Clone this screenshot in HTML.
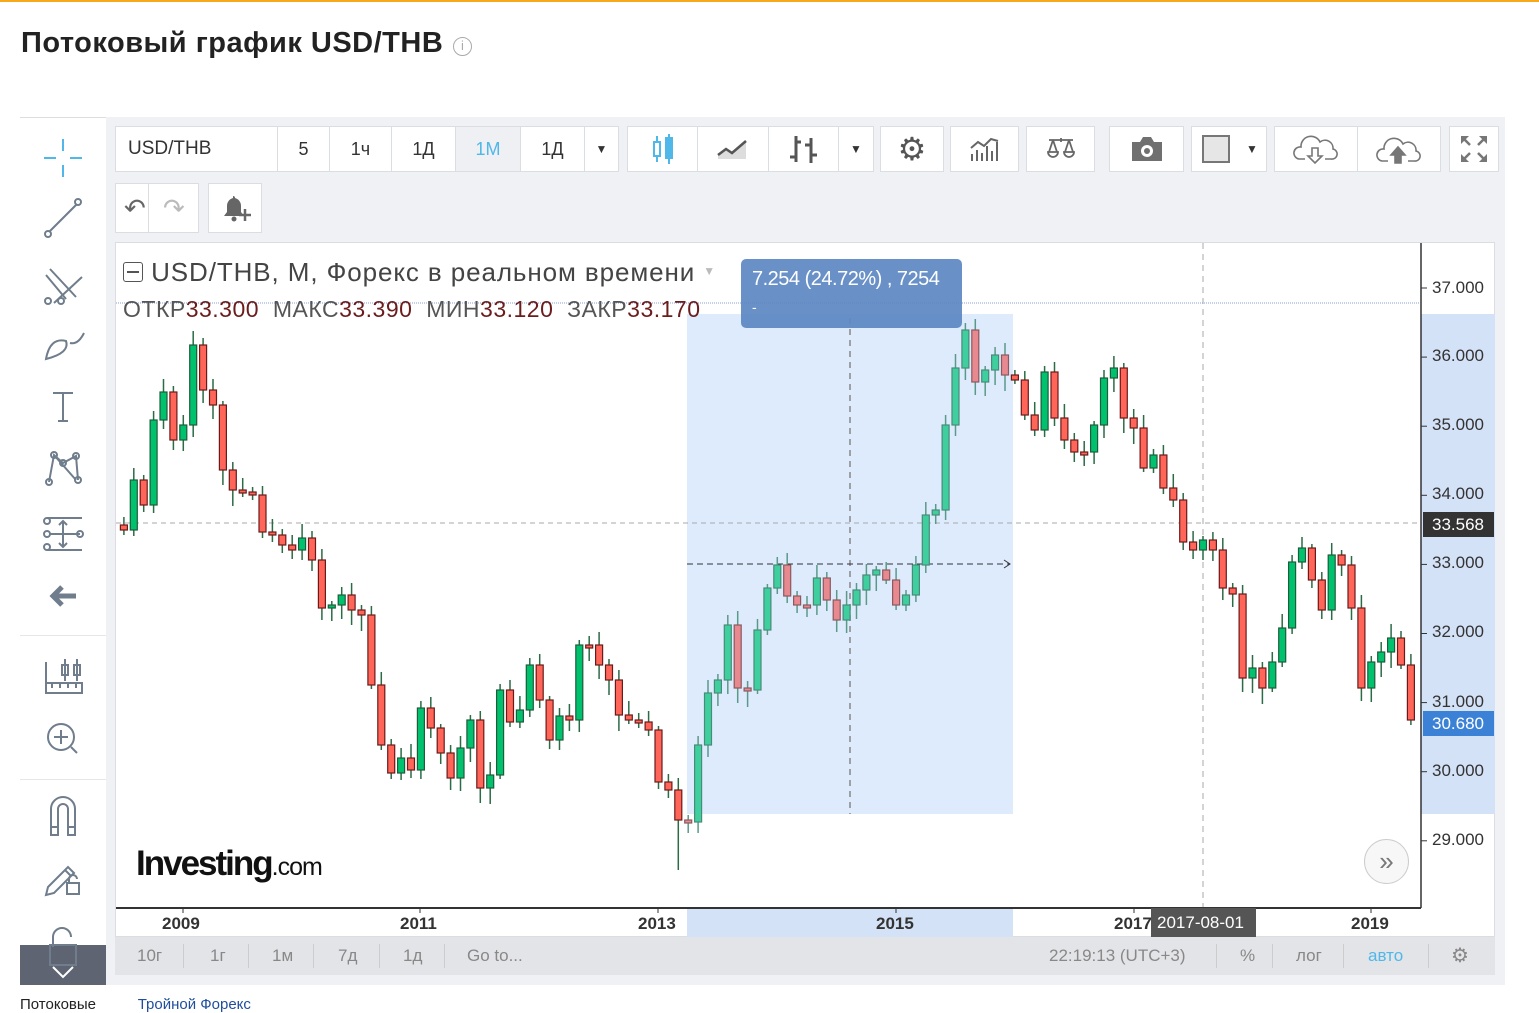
<!DOCTYPE html>
<html><head><meta charset="utf-8">
<style>
*{box-sizing:border-box;margin:0;padding:0}
body{width:1539px;height:1002px;overflow:hidden;background:#fff;font-family:"Liberation Sans",Arial,sans-serif;position:relative}
.abs{position:absolute}
.btn{position:absolute;top:126px;height:46px;background:#fff;border:1px solid #dadde2;display:flex;align-items:center;justify-content:center;font-size:18px;color:#333}
.ax{position:absolute;left:1432px;font-size:17px;color:#333}
.bb{position:absolute;top:946px;font-size:17px;color:#888}
.sep{position:absolute;top:944px;width:1px;height:24px;background:#ccc}
</style></head><body>
<div class="abs" style="left:0;top:0;width:1539px;height:2px;background:#f7a81b"></div>
<div class="abs" style="left:21px;top:27px;font-size:29px;font-weight:bold;color:#222;letter-spacing:0.5px">Потоковый график USD/THB</div>
<div class="abs" style="left:453px;top:37px;width:19px;height:19px;border:1.5px solid #aaa;border-radius:50%;color:#aaa;font-size:13px;text-align:center;line-height:16px">i</div>

<div class="abs" style="left:20px;top:117px;width:86px;height:868px;background:#fff;border-top:1px solid #ddd"></div>
<div class="abs" style="left:20px;top:635px;width:86px;height:1px;background:#e3e6ea"></div>
<div class="abs" style="left:20px;top:779px;width:86px;height:1px;background:#e3e6ea"></div>
<svg class="abs" style="left:20px;top:117px" width="86" height="868" fill="none" stroke="#6f7d8c" stroke-width="2">
<g stroke="#4fb8e8"><line x1="43" y1="22" x2="43" y2="34"/><line x1="43" y1="48" x2="43" y2="60"/><line x1="24" y1="41" x2="36" y2="41"/><line x1="50" y1="41" x2="62" y2="41"/></g>
<line x1="29" y1="115" x2="57" y2="87"/><circle cx="28" cy="117" r="3"/><circle cx="58" cy="85" r="3"/>
<path d="M26 158 L46 182 M30 152 L56 180 M34 186 L62 160" /><circle cx="28" cy="184" r="3"/><circle cx="41" cy="184" r="3"/>
<path d="M26 242 Q30 220 46 224 Q50 236 26 242 Z M50 226 Q58 228 64 216"/>
<path d="M33 276 H53 M43 276 V304 M38 304 H48"/>
<path d="M29 365 L34 338 L43 346 L56 339 L58 363 M34 338 L56 363"/><circle cx="29" cy="365" r="3"/><circle cx="34" cy="338" r="3"/><circle cx="43" cy="346" r="3"/><circle cx="56" cy="339" r="3"/><circle cx="58" cy="363" r="3"/>
<path d="M27 401 H62 M27 433 H62 M30 417 H60 M43 404 V430 M39 408 L43 404 L47 408 M39 426 L43 430 L47 426"/><circle cx="27" cy="404" r="3"/><circle cx="27" cy="417" r="3"/><circle cx="27" cy="430" r="3"/><circle cx="60" cy="417" r="3"/>
<path d="M56 479 H34 M42 470 L33 479 L42 488" stroke-width="5"/>
<path d="M26 545 V576 H62 V566 H26 M32 566 V571 M40 566 V571 M48 566 V571 M56 566 V571 M42 548 H48 V558 H42 Z M54 548 H60 V558 H54 Z M45 542 V564 M57 542 V564"/>
<circle cx="41" cy="620" r="13"/><path d="M41 613 V627 M34 620 H48 M51 630 L57 636"/>
<path d="M31 718 V692 A12 12 0 0 1 55 692 V718 H48 V692 A5 5 0 0 0 38 692 V718 Z M31 710 H38 M48 710 H55"/>
<path d="M28 770 L48 750 L54 756 L34 776 L26 778 Z M45 753 L51 759"/><rect x="47" y="766" width="12" height="11"/><path d="M49 766 V762 A4 4 0 0 1 57 762"/>
</svg>
<div class="abs" style="left:20px;top:945px;width:86px;height:40px;background:#5f6472"></div>
<svg class="abs" style="left:20px;top:925px" width="86" height="60" fill="none" stroke="#6f7d8c" stroke-width="2"><path d="M33 22 V12 A9 9 0 0 1 51 12"/><rect x="30" y="20" width="26" height="20"/><path d="M33 42 L43 52 L53 42" stroke="#fff"/></svg>

<div class="abs" style="left:106px;top:117px;width:1399px;height:868px;background:#f0f1f4"></div>

<div class="btn" style="left:115px;width:163px;justify-content:flex-start;padding-left:12px;font-size:19px">USD/THB</div>
<div class="btn" style="left:277px;width:53px">5</div>
<div class="btn" style="left:329px;width:63px">1ч</div>
<div class="btn" style="left:391px;width:65px">1Д</div>
<div class="btn" style="left:455px;width:66px;background:#eef0f3;color:#4fb8e8">1M</div>
<div class="btn" style="left:520px;width:65px">1Д</div>
<div class="btn" style="left:584px;width:35px;font-size:12px">▼</div>
<div class="btn" style="left:627px;width:71px"><svg width="26" height="34"><g stroke="#4fb8e8" stroke-width="2" fill="none"><line x1="7" y1="4" x2="7" y2="30"/><rect x="4" y="10" width="6" height="14" fill="#fff"/><line x1="19" y1="2" x2="19" y2="32"/><rect x="16" y="6" width="6" height="20" fill="#4fb8e8"/></g></svg></div>
<div class="btn" style="left:697px;width:72px"><svg width="34" height="24"><path d="M2 22 L2 18 L10 12 L16 16 L30 4 L30 22 Z" fill="#ddd"/><path d="M2 18 L10 12 L16 16 L30 4" stroke="#555" stroke-width="2.5" fill="none"/></svg></div>
<div class="btn" style="left:768px;width:71px"><svg width="30" height="32" stroke="#555" stroke-width="3" fill="none"><path d="M7 3 V29 M1 24 H7 M7 9 H12 M22 5 V30 M16 12 H22 M22 22 H28"/></svg></div>
<div class="btn" style="left:838px;width:36px;font-size:12px">▼</div>
<div class="btn" style="left:880px;width:64px;font-size:32px;color:#555">⚙</div>
<div class="btn" style="left:950px;width:69px"><svg width="32" height="26" stroke="#666" stroke-width="2" fill="none"><path d="M3 25 V18 M8 25 V14 M13 25 V17 M18 25 V10 M23 25 V15 M28 25 V6 M2 12 L9 6 L15 10 L22 3 L29 5"/></svg></div>
<div class="btn" style="left:1026px;width:69px"><svg width="32" height="26" stroke="#666" stroke-width="1.8" fill="none"><path d="M4 4 H28 M16 2 V6 M8 4 L4 16 M8 4 L12 16 M24 4 L20 16 M24 4 L28 16 M3 16 A5 5 0 0 0 13 16 Z M19 16 A5 5 0 0 0 29 16 Z" /></svg></div>
<div class="btn" style="left:1109px;width:75px"><svg width="36" height="28"><path d="M3 7 H11 L14 2 H22 L25 7 H33 V26 H3 Z" fill="#707070"/><circle cx="18" cy="16" r="6" fill="#fff"/><circle cx="18" cy="16" r="3" fill="#707070"/></svg></div>
<div class="btn" style="left:1191px;width:76px;justify-content:flex-start;padding-left:10px"><div style="width:28px;height:28px;background:#e6e6e6;border:2px solid #777"></div><span style="font-size:12px;margin-left:16px">▼</span></div>
<div class="btn" style="left:1274px;width:84px"><svg width="46" height="32" stroke="#777" stroke-width="1.6" fill="none"><path d="M12 26 H6 A6 6 0 0 1 8 14 A10 10 0 0 1 27 9 A8 8 0 0 1 40 16 A5 5 0 0 1 38 26 H32"/><path d="M19 15 H25 V23 H29 L22 30 L15 23 H19 Z"/></svg></div>
<div class="btn" style="left:1357px;width:84px"><svg width="46" height="32" stroke="#777" stroke-width="1.6" fill="none"><path d="M12 28 H6 A6 6 0 0 1 8 16 A10 10 0 0 1 27 11 A8 8 0 0 1 40 18 A5 5 0 0 1 38 28 H32"/><path d="M19 30 V22 H15 L22 14 L29 22 H25 V30 Z" fill="#777"/></svg></div>
<div class="btn" style="left:1449px;width:50px"><svg width="30" height="30" fill="#777"><path d="M2 2 H10 L2 10 Z M28 2 H20 L28 10 Z M2 28 H10 L2 20 Z M28 28 H20 L28 20 Z"/><path d="M4 4 L11 11 M26 4 L19 11 M4 26 L11 19 M26 26 L19 19" stroke="#777" stroke-width="2.5"/></svg></div>

<div class="btn" style="top:183px;left:115px;width:84px;height:50px"></div>
<div class="abs" style="top:184px;left:148px;width:1px;height:48px;background:#dadde2"></div>
<div class="abs" style="top:193px;left:124px;font-size:26px;color:#666">↶</div>
<div class="abs" style="top:193px;left:163px;font-size:26px;color:#bbb">↷</div>
<div class="btn" style="top:183px;left:208px;width:54px;height:50px"><svg width="32" height="30"><path d="M14 3 A2 2 0 0 1 16 5 A8 8 0 0 1 22 13 V19 L25 23 H5 L8 19 V13 A8 8 0 0 1 14 5 Z" fill="#666"/><circle cx="15" cy="26" r="2.5" fill="#666"/><path d="M26 16 V28 M20 22 H32" stroke="#666" stroke-width="2.5"/></svg></div>

<div class="abs" style="left:115px;top:242px;width:1380px;height:695px;background:#fff;border:1px solid #dadde2"></div>
<div class="abs" style="left:1421px;top:314px;width:74px;height:500px;background:#d4e2f7"></div>
<div class="abs" style="left:687px;top:314px;width:326px;height:500px;background:#ddebfd"></div>
<div class="abs" style="left:687px;top:908px;width:326px;height:29px;background:#d4e2f7"></div>
<svg id="ch" class="abs" style="left:0;top:0" width="1539" height="1002"></svg>

<div class="abs" style="left:123px;top:257px;font-size:26px;color:#444;letter-spacing:0.9px;white-space:nowrap"><span style="display:inline-block;width:20px;height:20px;border:1.5px solid #555;border-radius:3px;vertical-align:-1px;position:relative"><span style="position:absolute;left:3px;right:3px;top:8px;height:1.5px;background:#555"></span></span> USD/THB, M, Форекс в реальном времени <span style="font-size:12px;color:#bbb;vertical-align:6px">▼</span></div>
<div class="abs" style="left:123px;top:296px;font-size:23px;color:#555;letter-spacing:0.5px;white-space:nowrap">ОТКР<span style="color:#6b1c1c">33.300</span>&nbsp; МАКС<span style="color:#6b1c1c">33.390</span>&nbsp; МИН<span style="color:#6b1c1c">33.120</span>&nbsp; ЗАКР<span style="color:#6b1c1c">33.170</span></div>
<div class="abs" style="left:741px;top:259px;width:221px;height:69px;background:#5d88c3;opacity:.92;border-radius:5px;color:#fff;font-size:20px;padding:9px 0 0 11px;letter-spacing:-0.5px">7.254 (24.72%) , 7254<div style="font-size:14px;margin-top:8px">-</div></div>

<div class="ax" style="top:278px">37.000</div>
<div class="ax" style="top:346px">36.000</div>
<div class="ax" style="top:415px">35.000</div>
<div class="ax" style="top:484px">34.000</div>
<div class="ax" style="top:553px">33.000</div>
<div class="ax" style="top:622px">32.000</div>
<div class="ax" style="top:692px">31.000</div>
<div class="ax" style="top:761px">30.000</div>
<div class="ax" style="top:830px">29.000</div>
<div class="abs" style="left:1423px;top:512px;width:71px;height:25px;background:#333;color:#fff;font-size:17px;padding:3px 0 0 9px">33.568</div>
<div class="abs" style="left:1423px;top:711px;width:71px;height:25px;background:#3b82d6;color:#fff;font-size:17px;padding:3px 0 0 9px">30.680</div>

<div class="abs" style="left:136px;top:844px;font-size:35px;font-weight:bold;color:#111;letter-spacing:-2px">Investing<span style="font-size:25px;font-weight:normal;letter-spacing:-1px">.com</span></div>
<div class="abs" style="left:1364px;top:839px;width:45px;height:45px;border:1px solid #ccc;border-radius:50%;background:#f7f7f7;color:#777;text-align:center;line-height:42px;font-size:26px">»</div>

<div class="abs" style="left:162px;top:914px;font-size:17px;font-weight:bold;color:#333">2009</div>
<div class="abs" style="left:400px;top:914px;font-size:17px;font-weight:bold;color:#333">2011</div>
<div class="abs" style="left:638px;top:914px;font-size:17px;font-weight:bold;color:#333">2013</div>
<div class="abs" style="left:876px;top:914px;font-size:17px;font-weight:bold;color:#333">2015</div>
<div class="abs" style="left:1114px;top:914px;font-size:17px;font-weight:bold;color:#333">2017</div>
<div class="abs" style="left:1351px;top:914px;font-size:17px;font-weight:bold;color:#333">2019</div>
<div class="abs" style="left:1151px;top:908px;width:105px;height:29px;background:#555;color:#fff;font-size:17px;padding:5px 0 0 6px">2017-08-01</div>

<div class="abs" style="left:115px;top:937px;width:1380px;height:38px;background:#e3e4e7"></div>
<div class="bb" style="left:137px">10г</div><div class="sep" style="left:183px"></div>
<div class="bb" style="left:210px">1г</div><div class="sep" style="left:248px"></div>
<div class="bb" style="left:272px">1м</div><div class="sep" style="left:313px"></div>
<div class="bb" style="left:338px">7д</div><div class="sep" style="left:379px"></div>
<div class="bb" style="left:403px">1д</div><div class="sep" style="left:444px"></div>
<div class="bb" style="left:467px">Go to...</div>
<div class="bb" style="left:1049px">22:19:13 (UTC+3)</div><div class="sep" style="left:1216px"></div>
<div class="bb" style="left:1240px">%</div><div class="sep" style="left:1272px"></div>
<div class="bb" style="left:1296px">лог</div><div class="sep" style="left:1343px"></div>
<div class="bb" style="left:1368px;color:#4fb8e8">авто</div><div class="sep" style="left:1428px"></div>
<div class="bb" style="left:1451px;font-size:20px;top:943px">⚙</div>
<div class="abs" style="left:20px;top:996px;font-size:15px;color:#222">Потоковые&nbsp;&nbsp;&nbsp;&nbsp;&nbsp;&nbsp;&nbsp;&nbsp;&nbsp;&nbsp;<span style="color:#1f4e9c">Тройной Форекс</span></div>

<script>
(function(){
var ys=[525,530,480,505,420,392,440,425,345,390,405,470,490,492,495,532,535,545,550,538,560,608,605,595,610,615,685,745,773,758,770,708,728,753,778,748,720,788,775,690,722,710,665,700,740,716,720,645,645,665,680,715,720,722,730,782,790,820,822,745,693,680,625,688,690,630,588,565,596,605,605,578,600,620,605,590,575,570,580,605,595,565,515,510,425,368,330,382,370,355,375,380,415,430,372,418,440,452,452,425,378,368,418,428,468,455,488,500,542,550,540,550,588,594,678,668,688,662,628,562,548,580,610,555,565,608,688,662,652,638,665,720];
var s='';
s+='<line x1="1203" y1="243" x2="1203" y2="908" stroke="#aaa" stroke-dasharray="6,5"/>';
s+='<line x1="850" y1="318" x2="850" y2="814" stroke="#888" stroke-width="1.5" stroke-dasharray="6,5"/>';
s+='<line x1="116" y1="303" x2="1420" y2="303" stroke="#8a9fd6" stroke-dasharray="1,1"/>';
s+='<line x1="116" y1="523" x2="1420" y2="523" stroke="#aaa" stroke-dasharray="5,4"/>';
s+='<line x1="687" y1="564" x2="1010" y2="564" stroke="#333" stroke-dasharray="6,4"/>';
s+='<path d="M1004 560 L1010 564 L1004 568" stroke="#333" fill="none"/>';
s+='<line x1="1421" y1="243" x2="1421" y2="908" stroke="#333" stroke-width="1.5"/>';
s+='<line x1="116" y1="908" x2="1421" y2="908" stroke="#333" stroke-width="2"/>';
var ticks=[183,420,658,896,1134,1371];
for(var q=0;q<ticks.length;q++){var k=ticks[q];s+='<line x1="'+k+'" y1="908" x2="'+k+'" y2="913" stroke="#333"/>';}
for(var t=0;t<9;t++){var yy=288+t*69.1;s+='<line x1="1421" y1="'+yy+'" x2="1427" y2="'+yy+'" stroke="#333"/>';}
for(var i=1;i<ys.length;i++){
 var x=114+i*9.9,o=ys[i-1],c=ys[i];var up=c<o;var yt=Math.min(o,c),yb=Math.max(o,c);
 if(yb-yt<3){yb=yt+3;}
 var inSel=x>687&&x<1013;
 var fill=up?(inSel?'#3fcf9f':'#00c16e'):(inSel?'#e8888f':'#ff6659');
 var st=up?(inSel?'#4a8a78':'#1e5c3a'):(inSel?'#8a5a60':'#6b1a1a');
 var wk=(i*37%11)+4,wk2=(i*53%13)+4;
 if(i==57){wk2=50;}
 s+='<line x1="'+x+'" y1="'+(yt-wk)+'" x2="'+x+'" y2="'+(yb+wk2)+'" stroke="'+(inSel?'#5a9a88':'#2b6b45')+'" stroke-width="1.5"/>';
 s+='<rect x="'+(x-3.5)+'" y="'+yt+'" width="7" height="'+(yb-yt)+'" fill="'+fill+'" stroke="'+st+'" stroke-width="1.2"/>';
}
document.getElementById('ch').innerHTML=s;
})();
</script>
</body></html>
